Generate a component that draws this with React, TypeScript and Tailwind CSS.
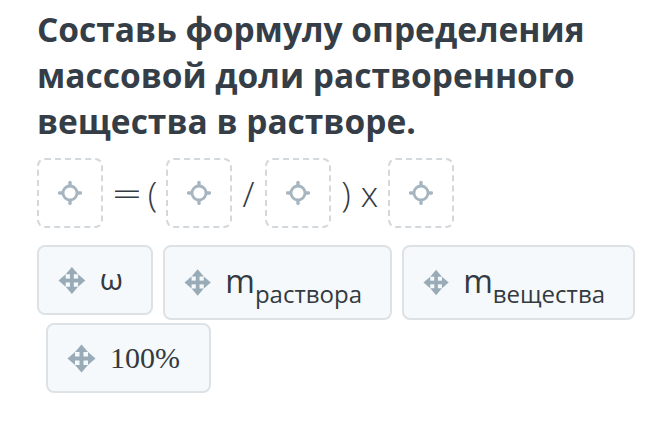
import React from "react";

const TARGET_ICON = "#a6b5c0";
const MOVE_ICON = "#9aabb8";

function Crosshair() {
  return (
    <svg width="26" height="26" viewBox="0 0 26 26" fill="none">
      <circle cx="13" cy="13" r="7" stroke={TARGET_ICON} strokeWidth="2.8" />
      <rect x="11.3" y="1" width="3.4" height="6" rx="1.4" fill={TARGET_ICON} />
      <rect x="11.3" y="19" width="3.4" height="6" rx="1.4" fill={TARGET_ICON} />
      <rect x="1" y="11.3" width="6" height="3.4" rx="1.4" fill={TARGET_ICON} />
      <rect x="19" y="11.3" width="6" height="3.4" rx="1.4" fill={TARGET_ICON} />
    </svg>
  );
}

function MoveIcon() {
  return (
    <svg width="29" height="29" viewBox="0 0 29 29" fill={MOVE_ICON}>
      <rect x="6" y="12.5" width="17" height="4" />
      <rect x="12.5" y="6" width="4" height="17" />
      <path d="M14.5 0.5 L8 8 H21 Z" />
      <path d="M14.5 28.5 L8 21 H21 Z" />
      <path d="M0.5 14.5 L8 8 V21 Z" />
      <path d="M28.5 14.5 L21 8 V21 Z" />
    </svg>
  );
}

function DropZone() {
  return (
    <div className="flex h-[70px] w-[66px] shrink-0 items-center justify-center rounded-lg border-2 border-dashed border-[#d3d8dc] bg-white">
      <Crosshair />
    </div>
  );
}

function Chip({ children, className = "" }: { children: React.ReactNode; className?: string }) {
  return (
    <div
      className={`flex items-center rounded-lg border-2 border-[#dde2e6] bg-[#f5f9fc] pl-[19px] pr-[28px] ${className}`}
    >
      <MoveIcon />
      <div className="ml-[14px] text-[#333a40]">{children}</div>
    </div>
  );
}

function Mass({ sub }: { sub: string }) {
  return (
    <span className="font-['Open_Sans',sans-serif] text-[32px] leading-none">
      m<sub className="text-[24px] align-[-0.2em] leading-none">{sub}</sub>
    </span>
  );
}

export default function App() {
  return (
    <div className="min-h-[443px] w-[672px] bg-white pl-[37px] pt-[6px] font-['Open_Sans',sans-serif]">
      <h1 className="w-[620px] text-[33.5px] font-bold leading-[46px] text-[#353e47]">
        Составь формулу определения массовой доли растворенного вещества в растворе.
      </h1>

      <div className="mt-[14px] flex items-center text-[#343b42]">
        <DropZone />
        <span className="ml-[8px] font-['DejaVu_Sans',sans-serif] text-[38px] font-extralight leading-none">=</span>
        <span className="ml-[5px] text-[35px] font-light leading-none">(</span>
        <div className="ml-[9px]">
          <DropZone />
        </div>
        <span className="ml-[10px] text-[35px] font-light leading-none">/</span>
        <div className="ml-[11px]">
          <DropZone />
        </div>
        <span className="ml-[10px] text-[35px] font-light leading-none">)</span>
        <span className="ml-[10px] text-[35px] font-light leading-none">x</span>
        <div className="ml-[10px]">
          <DropZone />
        </div>
      </div>

      <div className="mt-[17px] flex w-[610px] flex-wrap items-start gap-x-[10px] gap-y-[3px]">
        <Chip className="h-[70px] w-[116px]">
          <span className="text-[30px] leading-none">ω</span>
        </Chip>
        <Chip className="h-[75px] w-[229px]">
          <Mass sub="раствора" />
        </Chip>
        <Chip className="h-[75px] w-[233px]">
          <Mass sub="вещества" />
        </Chip>
        <Chip className="ml-[9px] h-[70px] w-[165px]">
          <span className="font-['Liberation_Serif',serif] text-[30px] leading-none">100%</span>
        </Chip>
      </div>
    </div>
  );
}
